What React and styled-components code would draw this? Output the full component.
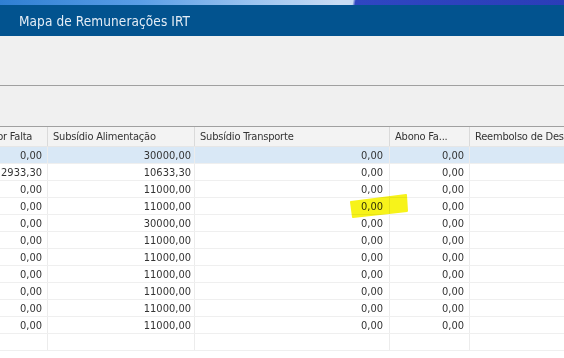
import React from "react";
import styled, { createGlobalStyle } from "styled-components";

const GlobalStyle = createGlobalStyle`
  html, body { margin: 0; padding: 0; background: #ffffff; }
  body { font-family: "DejaVu Sans", "Liberation Sans", sans-serif; }
  * { box-sizing: border-box; }
`;

const Window = styled.div`
  position: relative;
  width: 564px;
  height: 358px;
  overflow: hidden;
  display: flex;
  flex-direction: column;
  background: #ffffff;
`;

const TopStrip = styled.div`
  height: 5px;
  flex: none;
  background: linear-gradient(
    100deg,
    #2f7fd3 0%,
    #5a9ee6 25%,
    #9cc4f0 45%,
    #c9dcf4 60%,
    #c9dcf4 62.5%,
    #2f46c2 63%,
    #2b3db8 100%
  );
`;

const TitleBar = styled.div`
  height: 31px;
  flex: none;
  display: flex;
  align-items: center;
  padding-left: 19px;
  background: #02538f;
  color: #e4edf6;
  font-size: 13.5px;
  font-stretch: condensed;
  letter-spacing: 0.1px;
`;

const Panel = styled.div`
  flex: none;
  height: ${(p) => p.$h}px;
  background: #f0f0f0;
  border-bottom: 1px solid #a0a0a0;
`;

const Viewport = styled.div`
  flex: 1;
  overflow: hidden;
  background: #ffffff;
`;

const Table = styled.div`
  margin-left: -22px;
  width: 640px;
  font-size: 11px;
  font-stretch: condensed;
  color: #343434;
`;

const COLS = "70px 147px 195px 80px 148px";

const HeaderRow = styled.div`
  display: grid;
  grid-template-columns: ${COLS};
  height: 20px;
  background: #f3f3f3;
  border-bottom: 1px solid #e6e6e6;
`;

const HeaderCell = styled.div`
  display: flex;
  align-items: center;
  padding-left: 5px;
  white-space: nowrap;
  overflow: hidden;
  letter-spacing: -0.2px;
  border-right: 1px solid #dadada;
  color: #333333;
`;

const Row = styled.div`
  display: grid;
  grid-template-columns: ${COLS};
  height: 17px;
  background: ${(p) => (p.$selected ? "#d9e8f6" : "#ffffff")};
  border-bottom: 1px solid #efefef;
`;

const Cell = styled.div`
  display: flex;
  align-items: center;
  justify-content: flex-end;
  padding-right: ${(p) => p.$pr ?? 5}px;
  border-right: 1px solid #ececec;
  white-space: nowrap;
`;

const Highlight = styled.svg`
  position: absolute;
  left: 348px;
  top: 193px;
  width: 62px;
  height: 27px;
  mix-blend-mode: multiply;
  pointer-events: none;
`;

const rows = [
  ["0,00", "30000,00", "0,00", "0,00"],
  ["2933,30", "10633,30", "0,00", "0,00"],
  ["0,00", "11000,00", "0,00", "0,00"],
  ["0,00", "11000,00", "0,00", "0,00"],
  ["0,00", "30000,00", "0,00", "0,00"],
  ["0,00", "11000,00", "0,00", "0,00"],
  ["0,00", "11000,00", "0,00", "0,00"],
  ["0,00", "11000,00", "0,00", "0,00"],
  ["0,00", "11000,00", "0,00", "0,00"],
  ["0,00", "11000,00", "0,00", "0,00"],
  ["0,00", "11000,00", "0,00", "0,00"],
];

export default function App() {
  return (
    <>
      <GlobalStyle />
      <Window>
        <TopStrip />
        <TitleBar>Mapa de Remunerações IRT</TitleBar>
        <Panel $h={50} />
        <Panel $h={41} />
        <Viewport>
          <Table>
            <HeaderRow>
              <HeaderCell>Valor Falta</HeaderCell>
              <HeaderCell>Subsídio Alimentação</HeaderCell>
              <HeaderCell>Subsídio Transporte</HeaderCell>
              <HeaderCell>Abono Fa...</HeaderCell>
              <HeaderCell>Reembolso de Despesas</HeaderCell>
            </HeaderRow>
            {rows.map((r, i) => (
              <Row key={i} $selected={i === 0}>
                <Cell>{r[0]}</Cell>
                <Cell $pr={3}>{r[1]}</Cell>
                <Cell $pr={6}>{r[2]}</Cell>
                <Cell>{r[3]}</Cell>
                <Cell />
              </Row>
            ))}
            <Row>
              <Cell />
              <Cell />
              <Cell />
              <Cell />
              <Cell />
            </Row>
          </Table>
        </Viewport>
        <Highlight viewBox="0 0 62 27">
          <path
            d="M3 9 L58 2 L59 18 L5 24 Z"
            fill="#f7f31a"
            stroke="#f7f31a"
            strokeWidth="2"
            strokeLinejoin="round"
          />
        </Highlight>
      </Window>
    </>
  );
}
